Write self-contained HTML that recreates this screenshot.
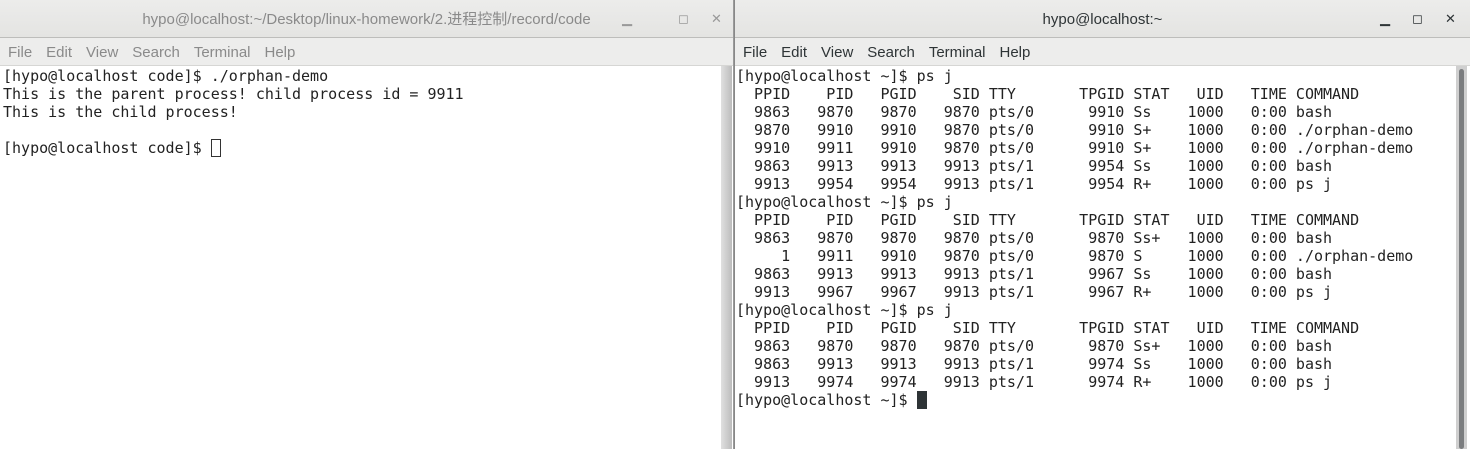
<!DOCTYPE html>
<html><head><meta charset="utf-8"><style>
*{margin:0;padding:0;box-sizing:border-box}
body{width:1470px;height:449px;overflow:hidden;background:#fff;position:relative;font-family:"Liberation Sans","DejaVu Sans","Noto Sans CJK SC",sans-serif}
.win{position:absolute;top:0;height:449px;background:#fff;overflow:hidden}
.title{position:absolute;left:0;right:0;top:0;height:38px;background:linear-gradient(#ececeb,#e4e4e2);border-bottom:1px solid #bdbdbb;font-size:15px;text-align:center;line-height:38px;padding-top:1px}
.menu{position:absolute;left:0;right:0;top:38px;height:28px;background:#ededec;border-bottom:1px solid #d6d6d4;font-size:15px;line-height:28px;padding-left:8px;padding-top:1px}
.menu span{margin-right:14px}
.ctl{position:absolute;top:0;height:38px;line-height:38px;font-size:13px}
pre{position:absolute;top:67px;font-family:"DejaVu Sans Mono","Liberation Mono",monospace;font-size:15px;line-height:18px;color:#222}
.sb{position:absolute;top:66px;bottom:0;width:11px;background:#cfcfcf}
.th{position:absolute;top:3px;bottom:0;left:3px;width:5px;background:#7b7d7f;border-radius:3px}
</style></head><body>
<div class="win" style="left:0;width:734px;border-right:1px solid #9a9a9a">
 <div class="title" style="color:#8a8a8a">hypo@localhost:~/Desktop/linux-homework/2.进程控制/record/code</div>
 <div class="ctl" style="left:622px;color:#999">▁</div>
 <div class="ctl" style="left:678px;color:#999">◻</div>
 <div class="ctl" style="left:711px;color:#999">✕</div>
 <div class="menu" style="color:#8a8a8a"><span>File</span><span>Edit</span><span>View</span><span>Search</span><span>Terminal</span><span>Help</span></div>
<pre style="left:3px">[hypo@localhost code]$ ./orphan-demo
This is the parent process! child process id = 9911
This is the child process!

[hypo@localhost code]$ <span style="display:inline-block;width:10px;height:18px;border:1px solid #333;vertical-align:top"></span></pre>
 <div class="sb" style="left:721px;background:linear-gradient(90deg,#e0e0e0,#bcbcbc)"></div>
</div>
<div class="win" style="left:734px;width:736px;border-left:1px solid #888">
 <div class="title" style="color:#2e3436">hypo@localhost:~</div>
 <div class="ctl" style="left:645px;color:#2e3436;font-weight:bold">▁</div>
 <div class="ctl" style="left:677px;color:#2e3436;font-weight:bold">◻</div>
 <div class="ctl" style="left:710px;color:#2e3436;font-weight:bold">✕</div>
 <div class="menu" style="color:#2e3436"><span>File</span><span>Edit</span><span>View</span><span>Search</span><span>Terminal</span><span>Help</span></div>
<pre style="left:1px">[hypo@localhost ~]$ ps j
  PPID    PID   PGID    SID TTY       TPGID STAT   UID   TIME COMMAND
  9863   9870   9870   9870 pts/0      9910 Ss    1000   0:00 bash
  9870   9910   9910   9870 pts/0      9910 S+    1000   0:00 ./orphan-demo
  9910   9911   9910   9870 pts/0      9910 S+    1000   0:00 ./orphan-demo
  9863   9913   9913   9913 pts/1      9954 Ss    1000   0:00 bash
  9913   9954   9954   9913 pts/1      9954 R+    1000   0:00 ps j
[hypo@localhost ~]$ ps j
  PPID    PID   PGID    SID TTY       TPGID STAT   UID   TIME COMMAND
  9863   9870   9870   9870 pts/0      9870 Ss+   1000   0:00 bash
     1   9911   9910   9870 pts/0      9870 S     1000   0:00 ./orphan-demo
  9863   9913   9913   9913 pts/1      9967 Ss    1000   0:00 bash
  9913   9967   9967   9913 pts/1      9967 R+    1000   0:00 ps j
[hypo@localhost ~]$ ps j
  PPID    PID   PGID    SID TTY       TPGID STAT   UID   TIME COMMAND
  9863   9870   9870   9870 pts/0      9870 Ss+   1000   0:00 bash
  9863   9913   9913   9913 pts/1      9974 Ss    1000   0:00 bash
  9913   9974   9974   9913 pts/1      9974 R+    1000   0:00 ps j
[hypo@localhost ~]$ <span style="display:inline-block;width:10px;height:18px;background:#2e3436;vertical-align:top"></span></pre>
 <div class="sb" style="left:721px"><div class="th"></div></div>
</div>
</body></html>
